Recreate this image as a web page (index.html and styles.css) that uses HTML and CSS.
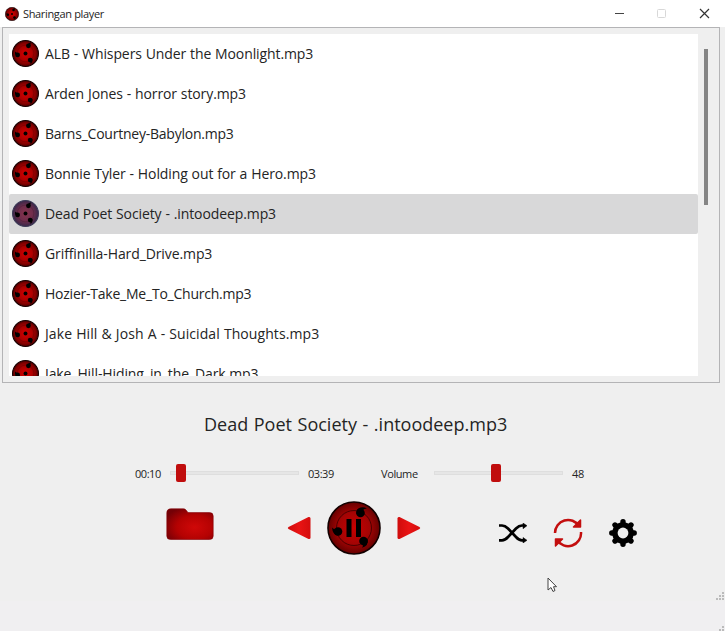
FILE: index.html
```html
<!DOCTYPE html>
<html lang="en">
<head>
<meta charset="utf-8">
<title>Sharingan player</title>
<link rel="stylesheet" href="styles.css">
</head>
<body>
<svg class="defs" aria-hidden="true">
  <defs>
    <radialGradient id="eye"><stop offset="0" stop-color="#d40000"/><stop offset=".5" stop-color="#b00000"/><stop offset=".8" stop-color="#850000"/><stop offset="1" stop-color="#480000"/></radialGradient>
    <radialGradient id="eyeSel"><stop offset="0" stop-color="#87334d"/><stop offset=".6" stop-color="#6d2d4c"/><stop offset="1" stop-color="#38284a"/></radialGradient>
    <radialGradient id="eyeBig"><stop offset="0" stop-color="#c80000"/><stop offset=".6" stop-color="#a40404"/><stop offset="1" stop-color="#650000"/></radialGradient>
    <radialGradient id="folder" cx=".6" cy=".6" r=".7"><stop offset="0" stop-color="#d00808"/><stop offset=".55" stop-color="#b40202"/><stop offset="1" stop-color="#740006"/></radialGradient>
    <linearGradient id="arrow"><stop offset="0" stop-color="#cf0c0c"/><stop offset=".5" stop-color="#e91414"/><stop offset="1" stop-color="#d40d0d"/></linearGradient>
    <symbol id="disc" viewBox="0 0 26 26">
      <circle cx="13" cy="13" r="8" fill="none" stroke="#000" stroke-opacity=".2" stroke-width=".7"/>
      <g fill="currentColor"><circle cx="13" cy="13" r="1.9"/><circle cx="15.8" cy="5.6" r="2.3"/><path d="M15 4q2-2 4-1.500q-2 1-1.500 3z"/><circle cx="5.400" cy="14.400" r="2.300"/><path d="M3.200 14.500q-.7-2.300 0-3.500q1 1.500 3 1.700z"/><circle cx="17.500" cy="19.300" r="2.300"/><path d="M19.600 18q.8 3.500-1.800 5q.4-1.800-.8-2z"/></g>
    </symbol>
    <symbol id="tomoe" viewBox="0 0 26 26"><circle cx="13" cy="13" r="12.500" fill="url(#eye)" stroke="#170000"/><use href="#disc"/></symbol>
    <symbol id="tomoeSel" viewBox="0 0 26 26"><circle cx="13" cy="13" r="12.500" fill="url(#eyeSel)" stroke="#3d3b58"/><use href="#disc"/></symbol>
  </defs>
</svg>
<div class="window">
  <header class="titlebar">
    <svg class="app-icon"><use href="#tomoe"/></svg>
    <span class="app-name">Sharingan player</span>
    <svg class="window-buttons" viewBox="0 0 96 12"><path d="M1 5.500H10" stroke="#444"/><rect x="43.500" y="1.500" width="8" height="8" rx="1" fill="none" stroke="#d8d8d8"/><path d="M86 1l9 9M95 1l-9 9" stroke="#333" stroke-width="1.200"/></svg>
  </header>
  <section class="frame">
    <ul class="list">
      <li class="song"><svg><use href="#tomoe"/></svg><span>ALB - Whispers Under the Moonlight.mp3</span></li>
      <li class="song"><svg><use href="#tomoe"/></svg><span>Arden Jones - horror story.mp3</span></li>
      <li class="song tight"><svg><use href="#tomoe"/></svg><span>Barns_Courtney-Babylon.mp3</span></li>
      <li class="song"><svg><use href="#tomoe"/></svg><span>Bonnie Tyler - Holding out for a Hero.mp3</span></li>
      <li class="song selected"><svg><use href="#tomoeSel"/></svg><span>Dead Poet Society - .intoodeep.mp3</span></li>
      <li class="song"><svg><use href="#tomoe"/></svg><span>Griffinilla-Hard_Drive.mp3</span></li>
      <li class="song tight"><svg><use href="#tomoe"/></svg><span>Hozier-Take_Me_To_Church.mp3</span></li>
      <li class="song loose"><svg><use href="#tomoe"/></svg><span>Jake Hill &amp; Josh A - Suicidal Thoughts.mp3</span></li>
      <li class="song"><svg><use href="#tomoe"/></svg><span>Jake_Hill-Hiding_in_the_Dark.mp3</span></li>
    </ul>
    <div class="scrollbar"></div>
  </section>
  <h1 class="now"><span>Dead Poet Society - .intoodeep.mp3</span></h1>
  <div class="sliders">
    <span class="elapsed">00:10</span>
    <div class="slider"><i class="handle seek"></i></div>
    <span class="total">03:39</span>
    <span class="volume">Volume</span>
    <div class="slider"><i class="handle level"></i></div>
    <span class="percent">48</span>
  </div>
  <div class="controls">
    <svg class="folder" viewBox="0 0 48 32"><path d="M5 .8H17.500Q19 .8 20 2l2 2.600H43.500Q47.200 4.600 47.200 8V28Q47.200 31.500 43.500 31.500H4.500Q.8 31.500.8 28V5Q.8.8 5 .8z" fill="url(#folder)" stroke="#850006" stroke-width=".6"/></svg>
    <svg class="prev" viewBox="0 0 24 24"><path d="M1.500 11Q0 12 1.500 13L21.500 23Q23.500 23.500 23.500 21.500V2.500Q23.500.5 21.500 1z" fill="url(#arrow)"/></svg>
    <svg class="pause" viewBox="0 0 54 54">
      <circle cx="27" cy="27" r="26" fill="url(#eyeBig)" stroke="#120000" stroke-width="1.600"/>
      <circle cx="27" cy="27" r="17.500" fill="none" stroke="#4d0000"/>
      <path d="M19.500 18h5v18h-5zM29 18h5v18h-5z"/>
      <circle cx="33.500" cy="12" r="4.300"/><path d="M29.400 13q-.8-5 4-6.500q3.500-1 6.500 1q-4 0-4 3z"/>
      <circle cx="11" cy="30.500" r="4.300"/><path d="M11 34.500q-5.500-.8-6-8q2 2.500 5 1.200z"/>
      <circle cx="36.500" cy="40" r="4.300"/><path d="M40.500 38q1.500 7-5.500 8.800q1.800-1.800 0-4z"/>
    </svg>
    <svg class="next" viewBox="0 0 24 24"><path d="M22.500 11Q24 12 22.500 13L2.500 23Q.5 23.500.5 21.500V2.500Q.5.5 2.500 1z" fill="url(#arrow)"/></svg>
    <svg class="shuffle" viewBox="0 0 28 20"><g fill="none" stroke="#000" stroke-width="2.700"><path d="M0 2.500H3Q6 2.500 9 5.500L17 14Q20 17.300 23 17.300H25"/><path d="M0 17.300H3Q6 17.300 9 14L17 5.500Q20 2.500 23 2.500H25"/></g><path d="M24 0l4 2.700-4 3zM24 14.500l4 2.800-4 2.700z" stroke="#000" stroke-width=".5"/></svg>
    <svg class="repeat" viewBox="0 0 30 30" fill="none" stroke="#c30e0e" stroke-width="2.500"><path d="M2 15A13 13 0 0 1 26 8M28 14A13 13 0 0 1 4 22"/><path d="M27.500 2V9H20.500zM2.500 28V21H9.500z" fill="#c30e0e" stroke-width="1.500" stroke-linejoin="round"/></svg>
    <svg class="gear" viewBox="0 0 28 28"><g stroke="#000" stroke-width="5.400" stroke-linecap="round"><path d="M14 2.800V25.200M2.800 14H25.200M6 6L22 22M22 6L6 22"/></g><circle cx="14" cy="14" r="10.800"/><circle cx="14" cy="14" r="5.400" fill="#efefef"/></svg>
  </div>
  <svg class="grip" viewBox="0 0 9 9"><path d="M6 0h2v2H6zM3 3h2v2H3zM6 3h2v2H6zM0 6h2v2H0zM3 6h2v2H3zM6 6h2v2H6z" fill="#bbb"/></svg>
  <svg class="cursor" viewBox="0 0 11 16"><path d="M1 1V13L4 10.500L6 14.500L8 13.500L6.500 9.700H9.500z" fill="#fff" stroke="#444"/></svg>
</div>
<footer class="strip"><svg viewBox="0 0 6 5"><path d="M4 0h2v2H4zM1 3h2v2H1zM4 3h2v2H4z" fill="#bbb"/></svg></footer>
</body>
</html>
```
FILE: styles.css
```css
* { box-sizing: border-box; }
body { margin: 0; width: 725px; height: 631px; overflow: hidden; background: #f0eff1; color: #242424; font-family: "Open Sans", "Noto Sans", sans-serif; }
svg { display: block; flex: none; color: #000; }
.defs { position: absolute; width: 0; height: 0; }
.window { position: relative; height: 601px; background: #efefef; }
.titlebar { display: flex; align-items: center; height: 27px; padding: 0 15px 0 5px; background: #fff; }
.app-icon { width: 14px; height: 14px; }
.app-name { margin-left: 4px; font-size: 11px; letter-spacing: -.34px; white-space: nowrap; }
.window-buttons { width: 96px; height: 12px; margin-left: auto; }
.frame { display: flex; width: 718px; height: 356px; margin-left: 2px; padding: 6px 0 0 6px; border: 1px solid #b4b4b6; }
.list { width: 689px; height: 342px; margin: 0; padding: 0; overflow: hidden; list-style: none; background: #fff; }
.song { display: flex; align-items: center; height: 40px; padding: 0 0 2px 3px; font-size: 14px; white-space: nowrap; }
.song svg { width: 27px; height: 27px; }
.song span { margin-left: 6px; letter-spacing: -.1px; word-spacing: .35px; }
.song.tight span { letter-spacing: -.23px; }
.song.loose span { letter-spacing: .08px; }
.selected { border-radius: 2px; background: #d8d8d9; }
.scrollbar { width: 4px; height: 156px; margin: 15px 0 0 6px; background: #858585; }
.now { display: flex; height: 28px; margin: 27px 0 0 204px; font-size: 18px; line-height: 28px; font-weight: 400; word-spacing: .9px; white-space: nowrap; }
.sliders { display: flex; align-items: center; height: 22px; margin-top: 24px; padding-left: 135px; font-size: 11px; white-space: nowrap; }
.elapsed { width: 35px; letter-spacing: -.45px; }
.total { width: 73px; margin-left: 9px; letter-spacing: -.45px; }
.volume { width: 53px; letter-spacing: -.4px; }
.percent { margin-left: 9px; letter-spacing: -.4px; }
.slider { display: flex; align-items: center; width: 129px; height: 4px; border: 1px solid #dedede; background: #e6e6e6; }
.handle { width: 10px; height: 18px; border-radius: 2px; background: #c00d0d; flex: none; }
.seek { margin-left: 5px; }
.level { margin-left: 56px; }
.controls { display: flex; align-items: center; height: 54px; margin-top: 17px; padding-left: 166px; }
.folder { width: 48px; height: 32px; margin-top: -8px; }
.prev { width: 24px; height: 24px; margin-left: 73px; }
.pause { width: 54px; height: 54px; margin-left: 16px; }
.next { width: 24px; height: 24px; margin-left: 16px; }
.shuffle { width: 28px; height: 20px; margin: 9px 0 0 78px; }
.repeat { width: 30px; height: 30px; margin: 9px 0 0 26px; }
.gear { width: 28px; height: 28px; margin: 9px 0 0 26px; }
.grip { position: absolute; right: 0; bottom: 0; width: 9px; height: 9px; }
.cursor { position: absolute; left: 547px; top: 577px; width: 11px; height: 16px; }
.strip { display: flex; align-items: flex-end; justify-content: flex-end; height: 30px; }
.strip svg { width: 6px; height: 5px; margin-right: 1px; }
```
